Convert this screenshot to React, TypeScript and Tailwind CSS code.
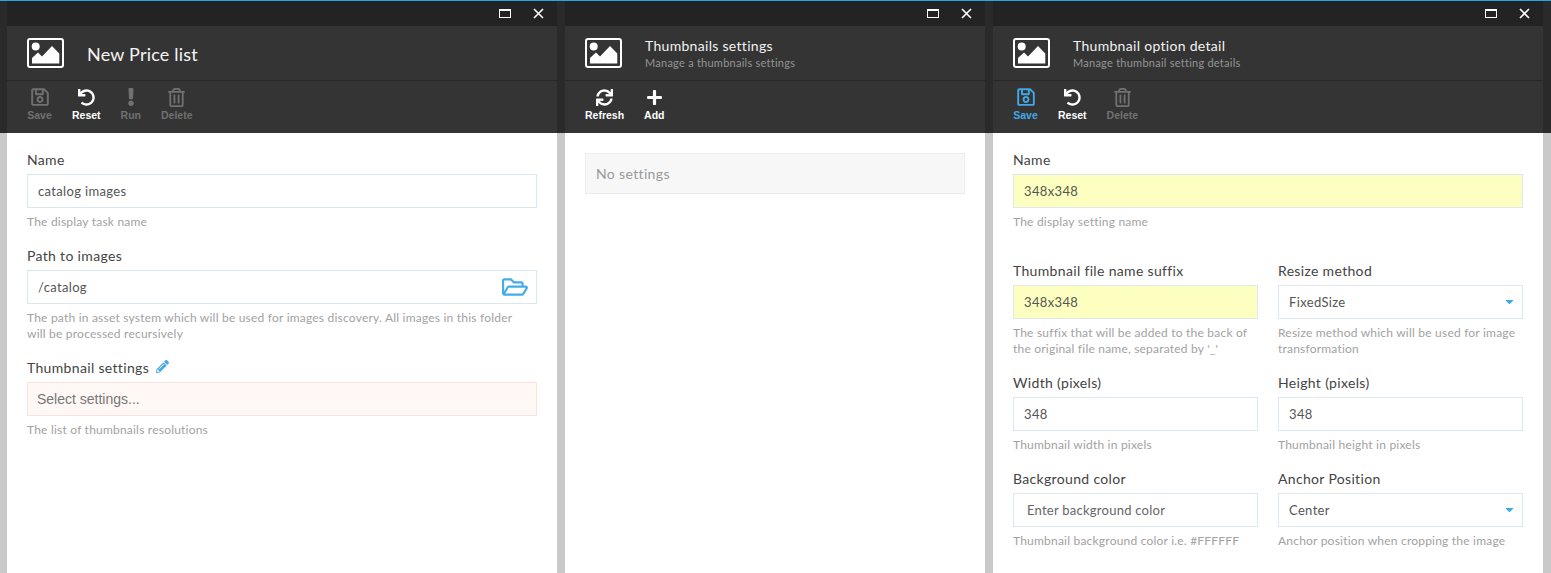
import type { ReactNode } from "react";
import {
  FaCaretDown,
  FaExclamation,
  FaPencilAlt,
  FaPlus,
  FaRegFolderOpen,
  FaRegSave,
  FaRegTrashAlt,
  FaSync,
  FaUndo,
} from "react-icons/fa";

function Gutter({ narrow }: { narrow?: boolean }) {
  return (
    <div className={`flex shrink-0 flex-col ${narrow ? "w-[7px]" : "w-2"}`}>
      <div className="h-[133px] bg-[#2a2a2a]"></div>
      <div className="flex-1 bg-[#c9c9c9]"></div>
    </div>
  );
}

function PictureIcon() {
  return (
    <svg width="37" height="30" viewBox="0 0 37 30" className="shrink-0">
      <rect x="1" y="1" width="35" height="28" rx="2" fill="none" stroke="white" strokeWidth="2" />
      <circle cx="8.7" cy="8.5" r="4" fill="white" />
      <path d="M5 25.500V20L11 14.500L15 18.500L25 8L32.300 15.500V25.500Z" fill="white" />
    </svg>
  );
}

type ToolProps = {
  icon: ReactNode;
  label: string;
  tone?: "on" | "off" | "blue";
};

function Tool({ icon, label, tone = "on" }: ToolProps) {
  const color =
    tone === "on"
      ? "text-white"
      : tone === "blue"
        ? "text-[#43a9e6]"
        : "text-[#717171]";
  const width = label === "Save" ? "w-[25px]" : "";
  return (
    <div className={`flex flex-col items-center ${width} ${color}`}>
      <div className="flex h-[20px] items-center justify-center">{icon}</div>
      <div className="mt-[1px] font-['Liberation_Sans',sans-serif] text-[10.5px] leading-[14px] font-bold">
        {label}
      </div>
    </div>
  );
}

type HeaderProps = {
  title: string;
  subtitle?: string;
  children: ReactNode;
};

function BladeHeader({ title, subtitle, children }: HeaderProps) {
  return (
    <div className="h-[132px] shrink-0">
      <div className="flex h-[25px] items-center justify-end gap-[22px] bg-[#232323] pr-[13px] text-white">
        <div className="h-[9px] w-[12px] border border-t-2 border-white"></div>
        <svg width="11" height="11" viewBox="0 0 11 11">
          <path d="M1 1L10 10M10 1L1 10" stroke="white" strokeWidth="1.6" />
        </svg>
      </div>
      <div className="flex h-[55px] items-center border-b border-[#272727] bg-[#343434] pl-[20px] text-white">
        <PictureIcon />
        {subtitle ? (
          <div className="ml-[23px]">
            <div className="text-[14px] leading-[18px] tracking-[0.3px] text-[#f2f2f2]">
              {title}
            </div>
            <div className="text-[11px] leading-[15px] tracking-[0.25px] text-[#949494]">
              {subtitle}
            </div>
          </div>
        ) : (
          <div className="mt-[2px] ml-[23px] text-[18px] leading-[24px] tracking-[0.2px] text-[#f5f5f5]">
            {title}
          </div>
        )}
      </div>
      <div className="flex h-[52px] gap-[20px] bg-[#343434] pt-[6px] pl-[20px]">
        {children}
      </div>
    </div>
  );
}

type FieldProps = {
  label: ReactNode;
  help?: ReactNode;
  children: ReactNode;
};

function Field({ label, help, children }: FieldProps) {
  return (
    <div className="min-w-0 flex-1">
      <div className="mb-[6px] flex h-[16px] items-center pb-[2px] text-[14px] tracking-[0.33px] text-[#444]">
        {label}
      </div>
      {children}
      {help && (
        <div className="mt-[6px] text-[12px] leading-[16px] tracking-[0.21px] text-[#a2a2a2]">
          {help}
        </div>
      )}
    </div>
  );
}

type BoxProps = {
  value: string;
  tone?: "plain" | "yellow";
  right?: ReactNode;
};

function Box({ value, tone = "plain", right }: BoxProps) {
  const look =
    tone === "yellow"
      ? "border-[#dfe8ee] bg-[#fdffc0]"
      : "border-[#dce8f1] bg-white";
  return (
    <div
      className={`flex h-[34px] items-center justify-between border px-[10px] text-[13px] tracking-[0.35px] text-[#555] ${look}`}
    >
      <span className="pt-[2px]">{value}</span>
      {right}
    </div>
  );
}

function Caret() {
  return <FaCaretDown className="mr-[-4px] mb-[2px] text-[13px] text-[#43a9e6]" />;
}

export default function App() {
  return (
    <div className="relative flex h-[573px] w-[1551px] overflow-hidden bg-[#c9c9c9] font-['Lato',sans-serif]">
      <div className="absolute top-0 left-0 h-px w-full bg-[#2aa4e8]"></div>
      <Gutter narrow />

      <div className="flex w-[550px] shrink-0 flex-col bg-white pt-px">
        <BladeHeader title="New Price list">
          <Tool tone="off" icon={<FaRegSave size={20} />} label="Save" />
          <Tool icon={<FaUndo size={17} />} label="Reset" />
          <Tool tone="off" icon={<FaExclamation size={18} />} label="Run" />
          <Tool tone="off" icon={<FaRegTrashAlt size={19} />} label="Delete" />
        </BladeHeader>
        <div className="flex flex-col gap-[18px] px-[20px] pt-[19px]">
          <Field label="Name" help="The display task name">
            <Box value="catalog images" />
          </Field>
          <Field
            label="Path to images"
            help={
              <>
                The path in asset system which will be used for images discovery. All images in this folder
                <br />
                will be processed recursively
              </>
            }
          >
            <Box
              value="/catalog"
              right={<FaRegFolderOpen className="mr-[-2px] mb-[1px] text-[26px] text-[#43ade8]" />}
            />
          </Field>
          <Field
            label={
              <span className="flex items-center gap-[7px]">
                Thumbnail settings
                <FaPencilAlt className="mb-[2px] text-[13px] text-[#4aa8e4]" />
              </span>
            }
            help="The list of thumbnails resolutions"
          >
            <div className="flex h-[34px] items-center border border-[#fde3e0] bg-[#fff8f5] px-[9px] font-['Liberation_Sans',sans-serif] text-[14px] text-[#777]">
              Select settings...
            </div>
          </Field>
        </div>
      </div>

      <Gutter />

      <div className="flex w-[420px] shrink-0 flex-col bg-white pt-px">
        <BladeHeader title="Thumbnails settings" subtitle="Manage a thumbnails settings">
          <Tool icon={<FaSync size={17} />} label="Refresh" />
          <Tool icon={<FaPlus size={17} />} label="Add" />
        </BladeHeader>
        <div className="px-[20px] pt-[20px]">
          <div className="flex h-[41px] items-center border border-[#ececec] bg-[#f7f7f7] px-[10px] text-[14px] tracking-[0.35px] text-[#999]">
            No settings
          </div>
        </div>
      </div>

      <Gutter />

      <div className="flex w-[550px] shrink-0 flex-col bg-white pt-px">
        <BladeHeader title="Thumbnail option detail" subtitle="Manage thumbnail setting details">
          <Tool tone="blue" icon={<FaRegSave size={20} />} label="Save" />
          <Tool icon={<FaUndo size={17} />} label="Reset" />
          <Tool tone="off" icon={<FaRegTrashAlt size={19} />} label="Delete" />
        </BladeHeader>
        <div className="flex flex-col gap-[18px] px-[20px] pt-[19px]">
          <div className="mb-[15px]">
            <Field label="Name" help="The display setting name">
              <Box tone="yellow" value="348x348" />
            </Field>
          </div>
          <div className="flex gap-[20px]">
            <Field
              label="Thumbnail file name suffix"
              help="The suffix that will be added to the back of the original file name, separated by '_'"
            >
              <Box tone="yellow" value="348x348" />
            </Field>
            <Field
              label="Resize method"
              help="Resize method which will be used for image transformation"
            >
              <Box value="FixedSize" right={<Caret />} />
            </Field>
          </div>
          <div className="flex gap-[20px]">
            <Field label="Width (pixels)" help="Thumbnail width in pixels">
              <Box value="348" />
            </Field>
            <Field label="Height (pixels)" help="Thumbnail height in pixels">
              <Box value="348" />
            </Field>
          </div>
          <div className="flex gap-[20px]">
            <Field label="Background color" help="Thumbnail background color i.e. #FFFFFF">
              <div className="flex h-[34px] items-center border border-[#dce8f1] px-[13px] pt-[2px] text-[13px] tracking-[0.25px] text-[#666]">
                Enter background color
              </div>
            </Field>
            <Field label="Anchor Position" help="Anchor position when cropping the image">
              <Box value="Center" right={<Caret />} />
            </Field>
          </div>
        </div>
      </div>

      <Gutter />
    </div>
  );
}
